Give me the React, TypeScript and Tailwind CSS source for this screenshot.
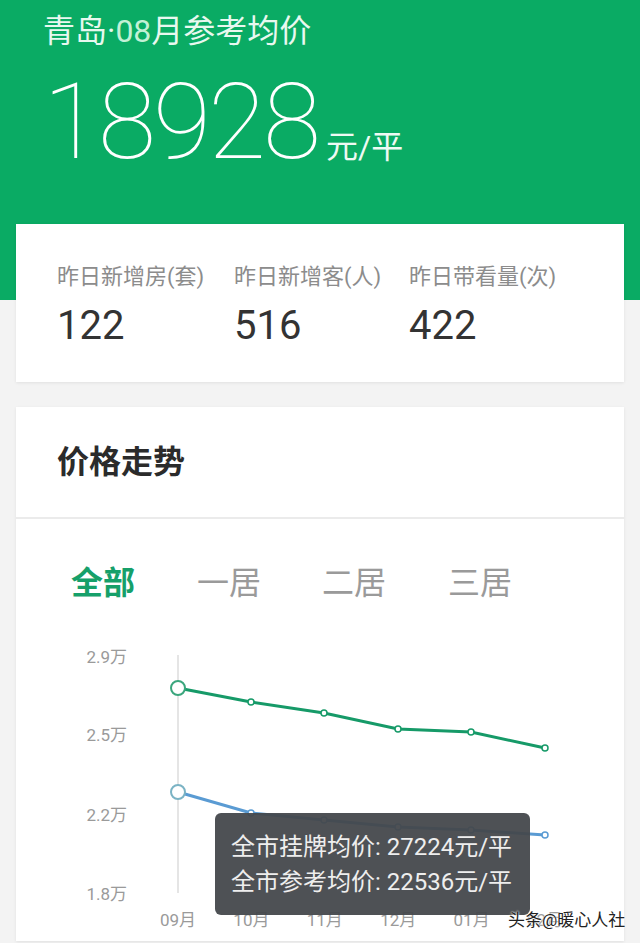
import React from "react"

const green = [
    [178, 690],
    [251, 704],
    [324, 715],
    [398, 731],
    [471, 734],
    [545, 750],
]
const blue = [
    [178, 794],
    [251, 815],
    [324, 822],
    [398, 829],
    [471, 832],
    [545, 837],
]
const yLabels = [
    ["2.9万", 659],
    ["2.5万", 737],
    ["2.2万", 817],
    ["1.8万", 896],
] as const
const months = ["09月", "10月", "11月", "12月", "01月", "02月"]

const stats = [
    { label: "昨日新增房(套)", value: "122", w: "w-[177px]" },
    { label: "昨日新增客(人)", value: "516", w: "w-[175px]" },
    { label: "昨日带看量(次)", value: "422", w: "w-[175px]" },
]

function Chart() {
    const pts = (arr: number[][]) => arr.map((p) => p.join(",")).join(" ")
    return (
        <div className="relative h-[323px]">
            <svg width="608" height="323" viewBox="16 620 608 323" className="block">
                {yLabels.map(([t, y]) => (
                    <text key={t} x="127" y={y + 6} textAnchor="end" fontSize="17" fill="#9a9a9a" fontFamily="Roboto, 'Noto Sans CJK SC', sans-serif">
                        {t}
                    </text>
                ))}
                <line x1="178" y1="657" x2="178" y2="895" stroke="#dcdcdc" strokeWidth="1.5" />
                <polyline points={pts(green)} fill="none" stroke="#169a68" strokeWidth="3" />
                <polyline points={pts(blue)} fill="none" stroke="#5a9bd3" strokeWidth="3" />
                {green.slice(1).map(([x, y]) => (
                    <circle key={x} cx={x} cy={y} r="3" fill="#fff" stroke="#169a68" strokeWidth="1.5" />
                ))}
                {blue.slice(1).map(([x, y]) => (
                    <circle key={x} cx={x} cy={y} r="3" fill="#fff" stroke="#5a9bd3" strokeWidth="1.5" />
                ))}
                <circle cx="178" cy="690" r="7" fill="#fff" stroke="#3ba67d" strokeWidth="2" />
                <circle cx="178" cy="794" r="7" fill="#fff" stroke="#7bb3c4" strokeWidth="2" />
                {months.map((m, i) => (
                    <text key={m} x={178 + i * 73.4} y="928" textAnchor="middle" fontSize="17" fill="#9a9a9a" fontFamily="Roboto, 'Noto Sans CJK SC', sans-serif">
                        {m}
                    </text>
                ))}
            </svg>

            {/* tooltip */}
            <div className="absolute left-[199px] top-[195px] flex h-[102px] w-[315px] flex-col justify-center gap-[5px] rounded-md bg-[#45484c]/95 pl-[16px] text-[24px] leading-[30px] text-[#eeeeee]">
                <div>全市挂牌均价: 27224元/平</div>
                <div>全市参考均价: 22536元/平</div>
            </div>

            {/* watermark */}
            <div className="absolute left-[492px] top-[290px] whitespace-nowrap text-[17px] leading-[24px] text-[#222] [text-shadow:0_0_2px_#fff,0_0_2px_#fff]">
                头条@暖心人社
            </div>
        </div>
    )
}

export default function App() {
    return (
        <div className="relative h-[943px] w-[640px] overflow-hidden bg-[#f3f3f3] font-['Roboto','Noto_Sans_CJK_SC',sans-serif]">
            {/* Header */}
            <div className="h-[300px] bg-[#0aab64] px-[43px] pt-[10px]">
                <div className="text-[32px] leading-[42px] text-[#e8f8ef]">
                    青岛·<span className="text-[#c3f1d6]">08</span>月参考均价
                </div>
                <div className="mt-[14px] flex items-baseline">
                    <span className="text-[106px] font-thin leading-[112px] tracking-[-3px] text-white">18928</span>
                    <span className="ml-[8px] text-[32px] text-[#eefaf3]">元/平</span>
                </div>
            </div>

            {/* Stats card */}
            <div className="mx-4 -mt-[76px] flex h-[158px] bg-white pl-[41px] pt-[38px] shadow-[0_1px_3px_rgba(0,0,0,0.08)]">
                {stats.map((s) => (
                    <div key={s.label} className={s.w}>
                        <div className="text-[22px] leading-[30px] text-[#8c8c8c]">{s.label}</div>
                        <div className="mt-[10px] text-[40px] leading-[48px] text-[#333]">{s.value}</div>
                    </div>
                ))}
            </div>

            {/* Price trend card */}
            <div className="mx-4 mt-[25px] bg-white shadow-[0_1px_3px_rgba(0,0,0,0.08)]">
                <div className="flex h-[112px] items-center border-b-2 border-[#ebebeb] pl-[41px]">
                    <span className="text-[32px] font-bold text-[#2b2b2b]">价格走势</span>
                </div>
                <div className="flex h-[99px] items-end pb-[14px] pl-[55px] text-[32px] leading-[42px]">
                    <span className="w-[126px] font-bold text-[#16a06a]">全部</span>
                    <span className="w-[125px] text-[#9a9a9a]">一居</span>
                    <span className="w-[126px] text-[#9a9a9a]">二居</span>
                    <span className="text-[#9a9a9a]">三居</span>
                </div>
                <Chart />
            </div>
        </div>
    )
}
